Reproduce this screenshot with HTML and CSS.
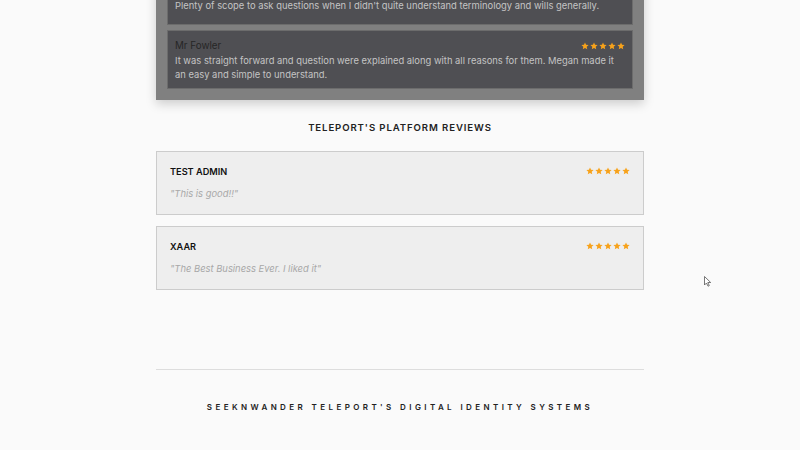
FILE: index.html
```html
<!DOCTYPE html>
<html lang="en">
<head>
    <meta charset="UTF-8">
    <meta name="viewport" content="width=device-width, initial-scale=1.0">
    <title>Teleport Reviews</title>
    <link rel="stylesheet" href="styles.css">
</head>
<body>
    <svg class="defs" width="0" height="0">
        <symbol id="star" viewBox="0 0 24 24">
            <path d="M12 1.5l3.2 7 7.6.8-5.7 5.1 1.6 7.5L12 18l-6.7 3.9 1.6-7.5L1.2 9.3l7.6-.8z"/>
        </symbol>
    </svg>

    <main class="page">
        <!-- agent feedback panel -->
        <section class="feedback">
            <div class="feedback-item first">
                <div class="feedback-head">
                    <span class="feedback-name">Mrs Ellis</span>
                </div>
                <p class="feedback-text">Plenty of scope to ask questions when I didn't quite understand terminology and wills generally.</p>
            </div>
            <div class="feedback-item">
                <div class="feedback-head">
                    <span class="feedback-name">Mr Fowler</span>
                    <span class="stars">
                        <svg><use href="#star"/></svg><svg><use href="#star"/></svg><svg><use href="#star"/></svg><svg><use href="#star"/></svg><svg><use href="#star"/></svg>
                    </span>
                </div>
                <p class="feedback-text">It was straight forward and question were explained along with all reasons for them. Megan made it an easy and simple to understand.</p>
            </div>
        </section>

        <h2 class="section-title">Teleport's Platform Reviews</h2>

        <div class="review">
            <div class="review-head">
                <span class="review-name">Test Admin</span>
                <span class="stars">
                    <svg><use href="#star"/></svg><svg><use href="#star"/></svg><svg><use href="#star"/></svg><svg><use href="#star"/></svg><svg><use href="#star"/></svg>
                </span>
            </div>
            <p class="review-quote">"This is good!!"</p>
        </div>

        <div class="review">
            <div class="review-head">
                <span class="review-name">Xaar</span>
                <span class="stars">
                    <svg><use href="#star"/></svg><svg><use href="#star"/></svg><svg><use href="#star"/></svg><svg><use href="#star"/></svg><svg><use href="#star"/></svg>
                </span>
            </div>
            <p class="review-quote">"The Best Business Ever. I liked it"</p>
        </div>

        <footer class="footer">
            <p>Seeknwander Teleport's Digital Identity Systems</p>
        </footer>
    </main>

    <svg class="cursor" width="8" height="11" viewBox="0 0 8 11">
        <path d="M0.5 0.5v8.5l2-2 1.5 3.2 1.3-.6-1.5-3.1h2.9z" fill="#fff" stroke="#555" stroke-width="0.8"/>
    </svg>
</body>
</html>
```

FILE: styles.css
```css
body {
    margin: 0;
    background: #fafafa;
    font-family: Inter, "Liberation Sans", sans-serif;
    color: #222;
}
.defs {
    position: absolute;
}
.page {
    width: 488px;
    margin: 0 auto;
}
.feedback {
    margin-top: -26px;
    background: #808080;
    padding: 0 11px 11px;
    display: flex;
    flex-direction: column;
    gap: 5px;
    box-shadow: 0 4px 10px rgba(0, 0, 0, 0.18);
}
.feedback-item {
    background: #4f4f53;
    border: 1px solid #6c6c6c;
    padding: 7px 7px 6px;
}
.feedback-item.first {
    padding-top: 8px;
    padding-bottom: 11px;
}
.feedback-head {
    display: flex;
    justify-content: space-between;
    align-items: center;
    height: 15px;
}
.feedback-name {
    font-size: 9.8px;
    color: #262626;
}
.feedback-text {
    margin: 1px 0 0;
    font-size: 9.4px;
    line-height: 14px;
    color: #c4c4c4;
}
.stars {
    display: flex;
    gap: 1px;
}
.stars svg {
    width: 8px;
    height: 8px;
    fill: #f7a21b;
}
.section-title {
    margin: 21px 0 16px;
    text-align: center;
    font-size: 9.6px;
    line-height: 14px;
    font-weight: 600;
    letter-spacing: 0.9px;
    text-transform: uppercase;
    color: #222;
}
.review {
    background: #eeeeee;
    border: 1px solid #cccccc;
    padding: 12px 13px 13px;
    margin-bottom: 11px;
}
.review-head {
    display: flex;
    justify-content: space-between;
    align-items: center;
    height: 14px;
}
.review-name {
    font-size: 9.2px;
    font-weight: 600;
    text-transform: uppercase;
    color: #111;
}
.review-quote {
    margin: 9px 0 0;
    font-size: 9.4px;
    line-height: 14px;
    font-style: italic;
    color: #a8a8a8;
}
.footer {
    margin-top: 79px;
    border-top: 1px solid #dddddd;
    padding-top: 31px;
    text-align: center;
}
.footer p {
    margin: 0;
    font-size: 8px;
    line-height: 12px;
    font-weight: 600;
    letter-spacing: 3.4px;
    text-transform: uppercase;
    color: #222;
}
.cursor {
    position: absolute;
    left: 704px;
    top: 276px;
}
```
